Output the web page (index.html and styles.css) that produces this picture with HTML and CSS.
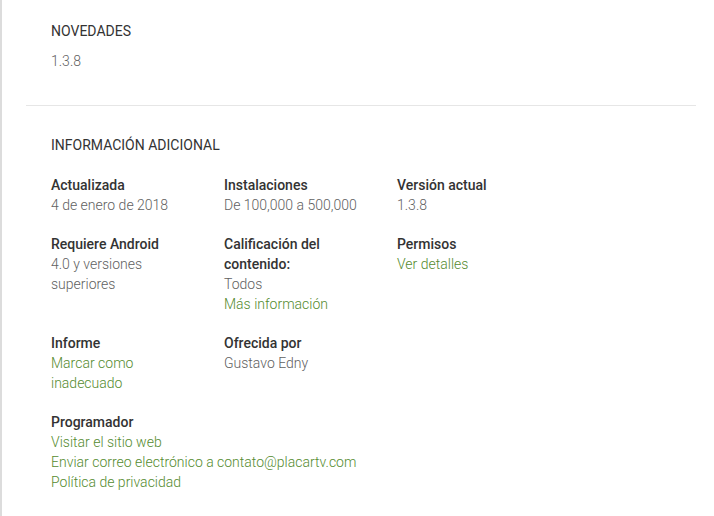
FILE: index.html
```html
<!DOCTYPE html>
<html lang="es">
<head>
    <meta charset="UTF-8">
    <meta name="viewport" content="width=device-width, initial-scale=1.0">
    <title>Detalles</title>
    <link rel="stylesheet" href="styles.css">
</head>
<body>
<div class="page">

    <div class="section whatsnew">
        <h3 class="heading">NOVEDADES</h3>
        <div class="value">1.3.8</div>
    </div>

    <div class="divider"></div>

    <div class="section info">
        <h3 class="heading">INFORMACIÓN ADICIONAL</h3>
        <div class="grid">
            <div class="item">
                <div class="title">Actualizada</div>
                <div class="value">4 de enero de 2018</div>
            </div>
            <div class="item">
                <div class="title">Instalaciones</div>
                <div class="value">De 100,000 a 500,000</div>
            </div>
            <div class="item">
                <div class="title">Versión actual</div>
                <div class="value">1.3.8</div>
            </div>

            <div class="item">
                <div class="title">Requiere Android</div>
                <div class="value">4.0 y versiones superiores</div>
            </div>
            <div class="item">
                <div class="title">Calificación del contenido:</div>
                <div class="value">Todos</div>
                <a class="link" href="#">Más información</a>
            </div>
            <div class="item">
                <div class="title">Permisos</div>
                <a class="link" href="#">Ver detalles</a>
            </div>

            <div class="item">
                <div class="title">Informe</div>
                <a class="link" href="#">Marcar como inadecuado</a>
            </div>
            <div class="item">
                <div class="title">Ofrecida por</div>
                <div class="value">Gustavo Edny</div>
            </div>
            <div class="item"></div>

            <div class="item wide">
                <div class="title">Programador</div>
                <a class="link" href="#">Visitar el sitio web</a>
                <a class="link" href="#">Enviar correo electrónico a contato@placartv.com</a>
                <a class="link" href="#">Política de privacidad</a>
            </div>
        </div>
    </div>

</div>
</body>
</html>
```

FILE: styles.css
```css
*{
    margin: 0px;
    padding: 0px;
    box-sizing: border-box;
}
body{
    font-family: Roboto, "Liberation Sans", sans-serif;
    font-size: 14px;
    line-height: 20px;
    background: #ffffff;
}
.page{
    min-height: 516px;
    width: 714px;
    border-left: 2px solid #dcdcdc;
}
.section{
    padding-left: 49px;
}
.whatsnew{
    padding-top: 21px;
    padding-bottom: 34px;
}
.heading{
    font-size: 14px;
    font-weight: 400;
    color: #333333;
    margin-bottom: 10px;
}
.info{
    padding-top: 29px;
}
.info>.heading{
    margin-bottom: 20px;
}
.value{
    color: #616161;
    font-weight: 300;
}
.divider{
    height: 1px;
    width: 670px;
    margin-left: 24px;
    background: #e6e6e6;
}
.grid{
    display: grid;
    grid-template-columns: 173px 173px 173px;
    row-gap: 19px;
}
.item{
    display: flex;
    flex-direction: column;
    padding-right: 30px;
}
.item.wide{
    grid-column: 1 / 4;
}
.title{
    font-weight: 500;
    color: #333333;
}
.link{
    color: #558b2f;
    font-weight: 300;
    text-decoration: none;
}
```
